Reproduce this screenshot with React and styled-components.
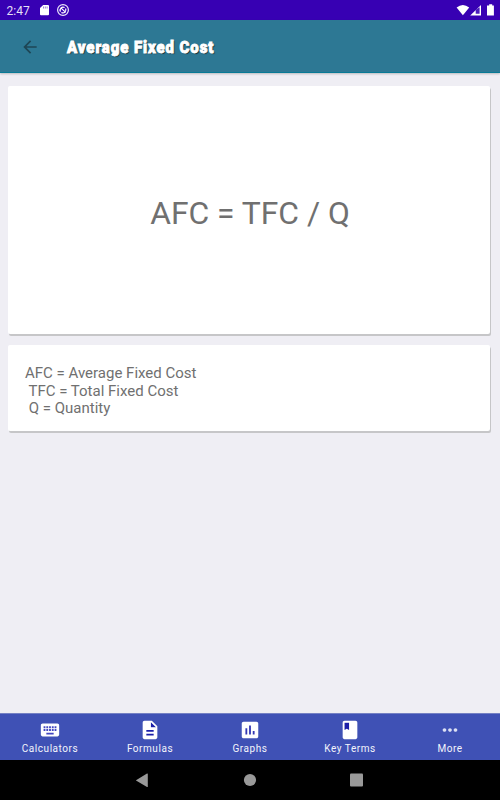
import React from "react";
import styled, { createGlobalStyle } from "styled-components";

const GlobalStyle = createGlobalStyle`
  * { box-sizing: border-box; }
  body { margin: 0; font-family: Roboto, "Liberation Sans", sans-serif; }
`;

const Screen = styled.div`
  width: 500px;
  height: 800px;
  display: flex;
  flex-direction: column;
  background: #efeef4;
  overflow: hidden;
`;

const StatusBar = styled.header`
  flex: 0 0 20px;
  display: flex;
  align-items: center;
  justify-content: space-between;
  padding: 0 5px 0 6px;
  background: #3700b3;
  color: #fff;
`;

const StatusGroup = styled.div`
  display: flex;
  align-items: center;
  height: 20px;
  svg { display: block; }
`;

const Clock = styled.span`
  width: 34px;
  font-size: 12px;
  line-height: 20px;
  color: #e6dff6;
  padding: 1px 0 0 0.5px;
`;

const AppBar = styled.div`
  flex: 0 0 53px;
  display: flex;
  align-items: center;
  padding: 1px 0 0 20px;
  background: #2d7894;
  border-bottom: 1px solid #087a96;
  box-shadow: 0 1px 2px rgba(0, 0, 0, 0.22);
`;

const BackButton = styled.button`
  display: flex;
  width: 47px;
  padding: 0;
  border: 0;
  background: none;
`;

const Title = styled.h1`
  margin: 0;
  padding-top: 1px;
  font-size: 17px;
  line-height: 24px;
  font-weight: 900;
  letter-spacing: 1px;
  color: #fff;
  white-space: nowrap;
  transform: scaleX(${(p) => p.$stretch});
  transform-origin: left center;
  -webkit-text-stroke: 0.9px #fff;
  text-shadow: 1px 1px 1px #0a222c;
`;

const Content = styled.main`
  flex: 1;
  display: flex;
  flex-direction: column;
  gap: 11px;
  padding: 13px 10px 0 8px;
`;

const Card = styled.section`
  height: ${(p) => p.$height}px;
  background: #fff;
  border-radius: 2px;
  box-shadow: 1px 2px 0.5px #c6c6c8;
`;

const FormulaCard = styled(Card)`
  display: flex;
  align-items: center;
  justify-content: center;
`;

const Formula = styled.div`
  font-size: 31.8px;
  line-height: 40px;
  color: #707070;
  white-space: nowrap;
  padding: 6px 0 0 2px;
`;

const Legend = styled(Card)`
  padding: 20px 17px;
  font-size: 15px;
  line-height: 17.6px;
  color: #707070;
  white-space: pre;
`;

const BottomNav = styled.nav`
  flex: 0 0 47px;
  display: grid;
  grid-template-columns: repeat(5, 1fr);
  background: #3f51b5;
  border-top: 1px solid #7480c4;
`;

const NavItem = styled.a`
  display: flex;
  flex-direction: column;
  align-items: center;
  padding-top: 5px;
  font-size: 10px;
  line-height: 12px;
  letter-spacing: 0.55px;
  color: #f3f4fb;
  svg { display: block; margin-bottom: 2px; }
`;

const SystemBar = styled.footer`
  flex: 0 0 40px;
  display: flex;
  align-items: center;
  justify-content: center;
  background: #000;
  svg { display: block; }
`;

const tabs = [
  {
    label: "Calculators",
    back: "M4 7h16v10.500H4z",
    shade: "#4247c0",
    d: "M20 5H4c-1.100 0-1.990.9-1.990 2L2 17c0 1.100.9 2 2 2h16c1.100 0 2-.9 2-2V7c0-1.100-.9-2-2-2zm-9 3h2v2h-2V8zm0 3h2v2h-2v-2zM8 8h2v2H8V8zm0 3h2v2H8v-2zm-1 2H5v-2h2v2zm0-3H5V8h2v2zm9 7H8v-2h8v2zm0-4h-2v-2h2v2zm0-3h-2V8h2v2zm3 3h-2v-2h2v2zm0-3h-2V8h2v2z",
  },
  {
    label: "Formulas",
    back: "M7 11h10v8H7zM13 3.500L18.500 9H13z",
    d: "M14 2H6c-1.100 0-1.990.9-1.990 2L4 20c0 1.100.89 2 1.990 2H18c1.100 0 2-.9 2-2V8l-6-6zm2 16H8v-2h8v2zm0-4H8v-2h8v2zm-3-5V3.500L18.500 9H13z",
  },
  {
    label: "Graphs",
    back: "M6 6h12v12H6z",
    shade: "#3438b4",
    d: "M19 3H5c-1.100 0-2 .9-2 2v14c0 1.100.9 2 2 2h14c1.100 0 2-.9 2-2V5c0-1.100-.9-2-2-2zM9 17H7v-7h2v7zm4 0h-2V7h2v10zm4 0h-2v-4h2v4z",
  },
  {
    label: "Key Terms",
    back: "M6 4h5v8H6z",
    d: "M18 2H6c-1.100 0-2 .9-2 2v16c0 1.100.9 2 2 2h12c1.100 0 2-.9 2-2V4c0-1.100-.9-2-2-2zM6 4h5v8l-2.500-1.500L6 12V4z",
  },
  {
    label: "More",
    tint: "#dce0f4",
    d: "M6 10c-1.100 0-2 .9-2 2s.9 2 2 2 2-.9 2-2-.9-2-2-2zm12 0c-1.100 0-2 .9-2 2s.9 2 2 2 2-.9 2-2-.9-2-2-2zm-6 0c-1.100 0-2 .9-2 2s.9 2 2 2 2-.9 2-2-.9-2-2-2z",
  },
];

export default function App() {
  return (
    <>
      <GlobalStyle />
      <Screen>
        <StatusBar>
          <StatusGroup>
            <Clock>2:47</Clock>
            <svg width="32" height="20" viewBox="0 0 32 20">
              <path d="M3.200 5H8q1 0 1 1v8.300q0 1-1 1H1q-1 0-1-1V8z" fill="#fff" />
              <path d="M3.500 6.500v2M5.300 6.500v2M7.100 6.500v2" stroke="#3700b3" strokeWidth=".5" />
              <circle cx="23" cy="10" r="5.400" fill="none" stroke="#ece7fa" strokeWidth="1.200" />
              <path d="M20.500 11.600A3 3 0 0 1 24.600 7.500M25.600 8.600A3 3 0 0 1 21.400 12.500M21.400 8.400l4.300 4" fill="none" stroke="#fff" strokeWidth="1.200" />
            </svg>
          </StatusGroup>
          <StatusGroup>
            <svg width="39" height="20" viewBox="0 0 39 20">
              <path d="M.6 7.600Q6.900 2.600 13.200 7.600L6.900 15.300z" fill="#fff" />
              <path d="M14.200 15.500L25 4.900v10.600z" fill="#fff" />
              <path d="M19.700 13.800v-4l3.900-2.600v6.600z" fill="#4a1cbc" />
              <path d="M31.500 5.400H33.200V4.200h3v1.200h1.700v10.100h-6.900V5.400z" fill="#fff" />
            </svg>
          </StatusGroup>
        </StatusBar>
        <AppBar>
          <BackButton aria-label="Back">
            <svg width="20" height="20" viewBox="0 0 24 24" fill="#1e4655">
              <path d="M20 11H7.830l5.590-5.590L12 4l-8 8 8 8 1.410-1.410L7.830 13H20v-2z" />
            </svg>
          </BackButton>
          <Title $stretch={0.885}>Average Fixed Cost</Title>
        </AppBar>
        <Content>
          <FormulaCard $height={248}>
            <Formula>AFC = TFC / Q</Formula>
          </FormulaCard>
          <Legend $height={86}>{"AFC = Average Fixed Cost\n TFC = Total Fixed Cost\n Q = Quantity"}</Legend>
        </Content>
        <BottomNav>
          {tabs.map((tab) => (
            <NavItem key={tab.label}>
              <svg width="22" height="22" viewBox="0 0 24 24">
                {tab.back && <path d={tab.back} fill={tab.shade || "#1b1fa8"} />}
                <path d={tab.d} fill={tab.tint || "#fff"} fillRule="evenodd" />
              </svg>
              {tab.label}
            </NavItem>
          ))}
        </BottomNav>
        <SystemBar>
          <svg width="228" height="20" viewBox="0 0 228 20" fill="#999">
            <path d="M-.2 10.300L11 3.500q.8-.4.800.5v12.500q0 .9-.8.4z" />
            <circle cx="114" cy="10" r="6.100" />
            <rect x="214" y="3.500" width="13" height="13" rx="1" />
          </svg>
        </SystemBar>
      </Screen>
    </>
  );
}
